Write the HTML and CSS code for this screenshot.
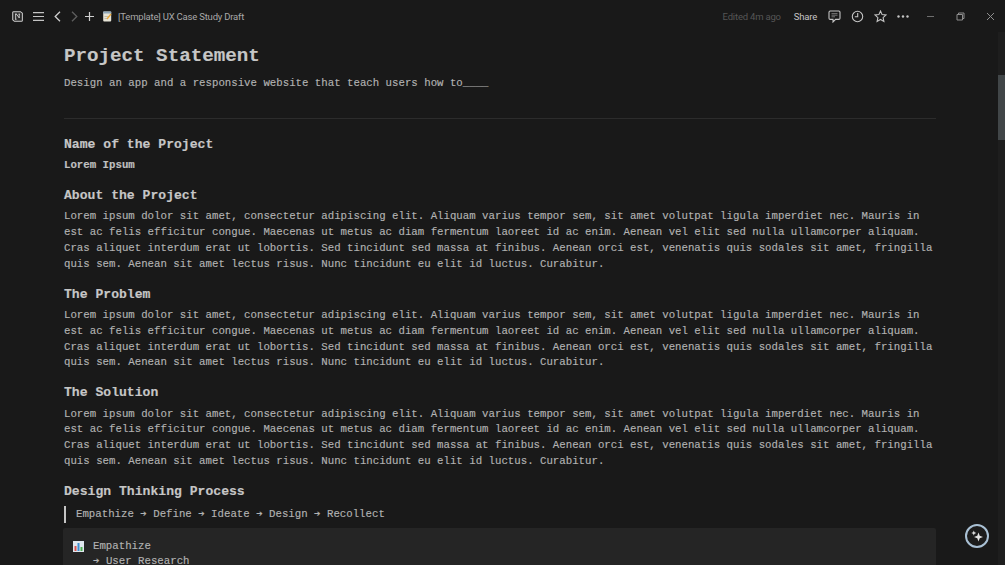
FILE: index.html
```html
<!DOCTYPE html>
<html lang="en">
<head>
<meta charset="utf-8">
<title>[Template] UX Case Study Draft</title>
<link rel="stylesheet" href="styles.css">
</head>
<body>
<div class="app">
  <header class="topbar">
    <div class="nav">
      <svg class="ic logo" viewBox="0 0 12 12"><path d="M2.400.7h6.800l2.100 1.700v7.900a1 1 0 0 1-1 1H2.600L.8 9.600V1.700a1 1 0 0 1 1-1z" fill="#2a2a2a" stroke="#cfcfcf" stroke-width="1.100"/><path d="M4 9V3.400h.9l3 4.200V3.400M3.300 3.400h1.700M7 3.400h1.800M3.300 9H5" fill="none" stroke="#e2e2e2" stroke-width=".9"/></svg>
      <svg class="ic menu" viewBox="0 0 11 9"><path d="M0 .7h11M0 4.500h11M0 8.300h11" stroke="#c4c4c4" stroke-width="1.200"/></svg>
      <svg class="ic chev" viewBox="0 0 7 11"><path d="M6 .8 1.200 5.500 6 10.200" fill="none" stroke="#cfcfcf" stroke-width="1.300"/></svg>
      <svg class="ic chev2" viewBox="0 0 7 11"><path d="M1 .8l4.800 4.700L1 10.200" fill="none" stroke="#5e5e5e" stroke-width="1.300"/></svg>
      <svg class="ic plus" viewBox="0 0 9 9"><path d="M4.500 0v9M0 4.500h9" stroke="#d0d0d0" stroke-width="1.200"/></svg>
      <svg class="ic page" viewBox="0 0 9 11"><rect x=".2" y=".5" width="8" height="10" rx="1" fill="#e6e3d6"/><path d="M.2.500h8v2h-8z" fill="#8fa6b8"/><path d="M1.500 5.500h4.500M1.500 7.500h3.500" stroke="#b9b4a0" stroke-width=".8"/><path d="m3.500 7.500 4-5 1 .9-4 5z" fill="#e8a73a"/></svg>
      <span class="doc-title">[Template] UX Case Study Draft</span>
    </div>
    <div class="actions">
      <span class="edited">Edited 4m ago</span>
      <span class="share">Share</span>
      <svg class="ic act" viewBox="0 0 13 13"><path d="M2.200 1h8.600A1.200 1.200 0 0 1 12 2.200v6a1.200 1.200 0 0 1-1.200 1.200H7.600L5 12V9.400H2.200A1.200 1.200 0 0 1 1 8.200v-6A1.200 1.200 0 0 1 2.200 1z" fill="none" stroke="#c4c4c4" stroke-width="1.100"/><path d="M3.500 3.600h6M3.500 5.200h6M3.500 6.800h3.500" stroke="#8a8a8a" stroke-width=".8"/></svg>
      <svg class="ic act" viewBox="0 0 13 13"><circle cx="6.500" cy="6.500" r="5.200" fill="none" stroke="#c4c4c4" stroke-width="1.100"/><path d="M6.700 3v3.800H3.800" fill="none" stroke="#c4c4c4" stroke-width="1.100"/></svg>
      <svg class="ic act" viewBox="0 0 13 13"><path d="m6.500 1 1.600 3.600 3.900.4-2.900 2.600.8 3.900-3.400-2-3.400 2 .8-3.900L1 5l3.900-.4z" fill="none" stroke="#c4c4c4" stroke-width="1.100"/></svg>
      <svg class="ic dots" viewBox="0 0 12 3"><circle cx="1.500" cy="1.500" r="1.200" fill="#c4c4c4"/><circle cx="6" cy="1.500" r="1.200" fill="#c4c4c4"/><circle cx="10.500" cy="1.500" r="1.200" fill="#c4c4c4"/></svg>
      <div class="win">
        <svg class="ic wbtn" viewBox="0 0 9 9"><path d="M1 4.500h7" stroke="#6e6e6e"/></svg>
        <svg class="ic wbtn" viewBox="0 0 9 9"><path d="M1 2.500h5.500V8H1z" fill="none" stroke="#8e8e8e"/><path d="M2.500 2.500V1H8v5.500H6.500" fill="none" stroke="#8e8e8e"/></svg>
        <svg class="ic wbtn" viewBox="0 0 9 9"><path d="m1 1 7 7M8 1 1 8" stroke="#8e8e8e"/></svg>
      </div>
    </div>
  </header>
  <div class="body-wrap">
    <main class="page-content">
      <h1>Project Statement</h1>
      <p class="lead">Design an app and a responsive website that teach users how to____</p>
      <hr>
      <h2 class="first">Name of the Project</h2>
      <p class="strong">Lorem Ipsum</p>
      <h2>About the Project</h2>
      <p>Lorem ipsum dolor sit amet, consectetur adipiscing elit. Aliquam varius tempor sem, sit amet volutpat ligula imperdiet nec. Mauris in est ac felis efficitur congue. Maecenas ut metus ac diam fermentum laoreet id ac enim. Aenean vel elit sed nulla ullamcorper aliquam. Cras aliquet interdum erat ut lobortis. Sed tincidunt sed massa at finibus. Aenean orci est, venenatis quis sodales sit amet, fringilla quis sem. Aenean sit amet lectus risus. Nunc tincidunt eu elit id luctus. Curabitur.</p>
      <h2>The Problem</h2>
      <p>Lorem ipsum dolor sit amet, consectetur adipiscing elit. Aliquam varius tempor sem, sit amet volutpat ligula imperdiet nec. Mauris in est ac felis efficitur congue. Maecenas ut metus ac diam fermentum laoreet id ac enim. Aenean vel elit sed nulla ullamcorper aliquam. Cras aliquet interdum erat ut lobortis. Sed tincidunt sed massa at finibus. Aenean orci est, venenatis quis sodales sit amet, fringilla quis sem. Aenean sit amet lectus risus. Nunc tincidunt eu elit id luctus. Curabitur.</p>
      <h2>The Solution</h2>
      <p>Lorem ipsum dolor sit amet, consectetur adipiscing elit. Aliquam varius tempor sem, sit amet volutpat ligula imperdiet nec. Mauris in est ac felis efficitur congue. Maecenas ut metus ac diam fermentum laoreet id ac enim. Aenean vel elit sed nulla ullamcorper aliquam. Cras aliquet interdum erat ut lobortis. Sed tincidunt sed massa at finibus. Aenean orci est, venenatis quis sodales sit amet, fringilla quis sem. Aenean sit amet lectus risus. Nunc tincidunt eu elit id luctus. Curabitur.</p>
      <h2>Design Thinking Process</h2>
      <blockquote>Empathize ➔ Define ➔ Ideate ➔ Design ➔ Recollect</blockquote>
      <section class="callout">
        <svg class="chart" viewBox="0 0 11 11"><rect width="11" height="11" fill="#dfe7ee"/><rect x="1.500" y="5" width="2" height="5" fill="#d9534f"/><rect x="4.500" y="2" width="2" height="8" fill="#3f8fd2"/><rect x="7.500" y="6" width="2" height="4" fill="#4caf50"/></svg>
        <div class="callout-text">
          <div>Empathize</div>
          <div>➔ User Research</div>
        </div>
      </section>
    </main>
    <div class="scrollbar"><div class="thumb"></div></div>
    <button class="ai-btn" aria-label="AI"><svg viewBox="0 0 14 14"><path d="m8.500 3.500 1.200 3.300 3.300 1.200-3.300 1.200-1.200 3.300-1.200-3.300L4 8l3.300-1.200z" fill="#e4e4e4"/><path d="m3.800 1.500.7 1.800 1.800.7-1.800.7-.7 1.800-.7-1.800L1.300 4l1.800-.7z" fill="#e4e4e4"/></svg></button>
  </div>
</div>
</body>
</html>
```
FILE: styles.css
```css
* { box-sizing: border-box; }
html, body { margin: 0; height: 100%; overflow: hidden; background: #191919; }
.app { height: 565px; display: flex; flex-direction: column; font-family: "Liberation Mono", "DejaVu Sans Mono", monospace; color: #b2b2b2; -webkit-text-stroke: 0.15px; }
.topbar { height: 32px; flex: none; display: flex; justify-content: space-between; align-items: center; padding-left: 12px; font-family: Roboto, "Liberation Sans", sans-serif; font-size: 9.5px; letter-spacing: -0.2px; -webkit-text-stroke: 0; }
.nav, .actions, .win { display: flex; align-items: center; }
.ic { display: block; flex: none; }
.logo { width: 11px; height: 11px; margin-right: 10px; }
.menu { width: 11px; height: 9px; margin-right: 10px; }
.chev { width: 7px; height: 11px; margin-right: 10px; }
.chev2 { width: 7px; height: 11px; margin-right: 7px; }
.plus { width: 9px; height: 9px; margin-right: 9px; }
.page { width: 9px; height: 11px; margin-right: 6px; }
.doc-title { color: #a8a8a8; }
.edited { color: #555; margin-right: 13px; }
.share { color: #c4c4c4; margin-right: 11px; }
.act { width: 13px; height: 13px; margin-right: 10px; }
.dots { width: 12px; height: 3px; margin-right: 17px; }
.win { gap: 21px; padding-right: 10px; }
.wbtn { width: 9px; height: 9px; }
.body-wrap { flex: 1; position: relative; min-height: 0; overflow: hidden; }
.page-content { padding: 0 69px 0 64px; height: 100%; overflow: hidden; font-size: 10.72px; line-height: 15.75px; }
h1 { margin: 0; padding-top: 12px; font-size: 19.2px; line-height: 24px; color: #c6c6c6; font-weight: 700; }
.lead { margin: 8px 0 0; }
hr { border: 0; border-top: 1px solid #2c2c2c; margin: 26px 0 0; }
h2 { margin: 13.2px 0 5.4px; font-size: 13.1px; line-height: 17px; color: #c6c6c6; font-weight: 700; }
h2.first { margin-top: 17px; }
p { margin: 0; }
.strong { font-weight: 700; color: #c0c0c0; }
blockquote { margin: 6px 0 0; border-left: 2px solid #c4c4c4; padding-left: 10px; height: 17px; line-height: 17px; }
.callout { margin: 5.4px 0 0 -1px; background: #252525; border-radius: 2px; display: flex; padding: 11px 10px; gap: 9px; height: 80px; line-height: 15px; }
.chart { width: 11px; height: 11px; margin-top: 2px; flex: none; }
.scrollbar { position: absolute; right: 0; top: 0; bottom: 0; width: 7px; background: #1e1e1e; }
.thumb { margin-top: 43px; height: 65px; background: #414648; }
.ai-btn { position: absolute; left: 965px; top: 492px; width: 24px; height: 24px; padding: 3px; border-radius: 50%; border: 2px solid #a9c0d4; background: #1c1c1c; display: flex; }
.ai-btn svg { width: 100%; height: 100%; display: block; }
```
